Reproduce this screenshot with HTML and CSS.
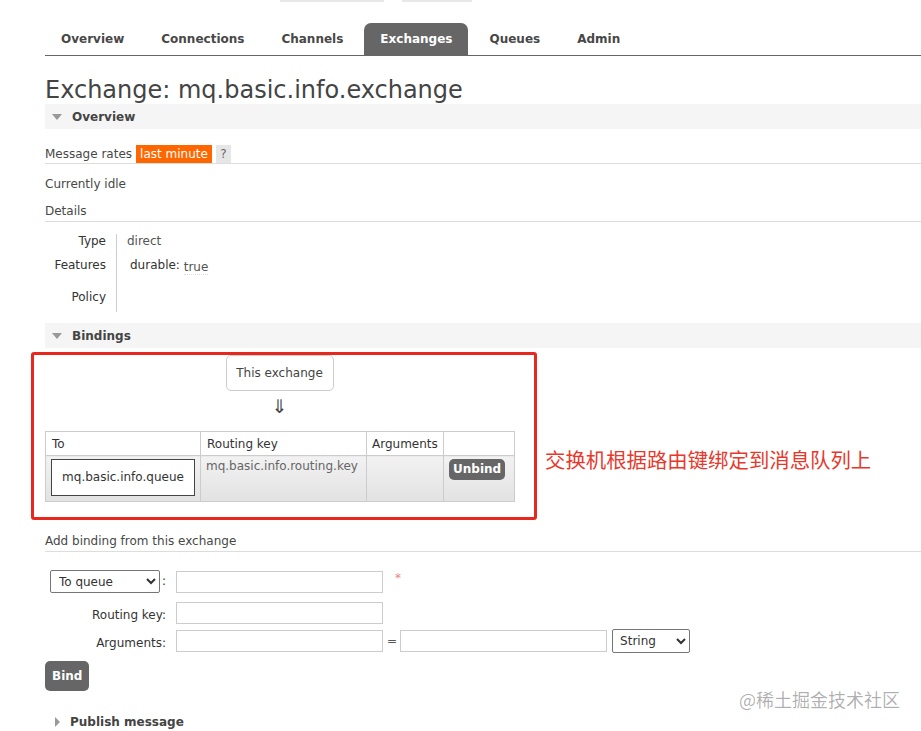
FILE: index.html
```html
<!DOCTYPE html>
<html lang="en">
<head>
<meta charset="utf-8">
<title>Exchange: mq.basic.info.exchange</title>
<link rel="stylesheet" href="styles.css">
</head>
<body>
<div class="topbars"><span class="tb tb1"></span><span class="tb tb2"></span></div>
<div class="page">
  <ul class="tabs">
    <li>Overview</li>
    <li>Connections</li>
    <li>Channels</li>
    <li class="active">Exchanges</li>
    <li>Queues</li>
    <li>Admin</li>
  </ul>
  <h1>Exchange: mq.basic.info.exchange</h1>

  <div class="section-head"><span class="tri-down"></span>Overview</div>
  <div class="rates">Message rates <span class="lm">last minute</span> <span class="help">?</span></div>
  <div class="idle">Currently idle</div>
  <div class="sub">Details</div>
  <div class="details">
    <div class="dl r1">Type</div><div class="dv r1">direct</div>
    <div class="dl r2">Features</div><div class="dv r2"><span class="feat">durable:</span> <span class="true">true</span></div>
    <div class="dl r3">Policy</div><div class="dv r3"></div>
  </div>

  <div class="section-head bind-head"><span class="tri-down"></span>Bindings</div>
  <div class="bind-row">
    <div class="annot">
      <div class="src">This exchange</div>
      <div class="arrow">⇓</div>
      <table class="btable">
        <colgroup><col class="c1"><col class="c2"><col class="c3"><col class="c4"></colgroup>
        <thead>
          <tr><th>To</th><th>Routing key</th><th>Arguments</th><th></th></tr>
        </thead>
        <tbody>
          <tr>
            <td><div class="qbox">mq.basic.info.queue</div></td>
            <td class="rk">mq.basic.info.routing.key</td>
            <td></td>
            <td><span class="btn small">Unbind</span></td>
          </tr>
        </tbody>
      </table>
    </div>
    <div class="annot-text">交换机根据路由键绑定到消息队列上</div>
  </div>

  <div class="sub add">Add binding from this exchange</div>
  <div class="frow row1">
    <div class="flabel"><select class="sel-to"><option>To queue</option></select>:</div>
    <input class="inp" type="text">
    <span class="req">*</span>
  </div>
  <div class="frow row2">
    <div class="flabel">Routing key:</div>
    <input class="inp" type="text">
  </div>
  <div class="frow row3">
    <div class="flabel">Arguments:</div>
    <input class="inp" type="text">
    <span class="eq">=</span>
    <input class="inp" type="text">
    <select class="sel-type"><option>String</option></select>
  </div>
  <div class="btn big">Bind</div>

  <div class="publish"><span class="tri-right"></span>Publish message</div>
</div>
<div class="watermark">@稀土掘金技术社区</div>
</body>
</html>
```
FILE: styles.css
```css
html, body {
  margin: 0;
  padding: 0;
  background: #fff;
}
body {
  position: relative;
  width: 921px;
  height: 731px;
  overflow: hidden;
  font-family: "DejaVu Sans", Verdana, sans-serif;
  font-size: 12px;
  color: #484848;
}
.topbars {
  display: flex;
  height: 2px;
  padding-left: 280px;
  gap: 18px;
}
.tb { background: #e8e8e8; height: 2px; }
.tb1 { width: 104px; }
.tb2 { width: 70px; }

.page {
  padding-left: 45px;
}

.tabs {
  list-style: none;
  margin: 21px 0 0;
  padding: 0;
  display: flex;
  height: 32px;
  border-bottom: 1px solid #666;
}
.tabs li {
  padding: 0 16px;
  margin-right: 5px;
  line-height: 33px;
  font-weight: bold;
  color: #484848;
  border-radius: 7px 7px 0 0;
}
.tabs li.active {
  background: #666;
  color: #fff;
}

h1 {
  margin: 21px 0 0;
  font-size: 24px;
  font-weight: normal;
  line-height: 27px;
  color: #444;
}

.section-head {
  display: flex;
  align-items: center;
  height: 25px;
  background: #f5f5f5;
  font-weight: bold;
  color: #444;
}
.tri-down {
  width: 0;
  height: 0;
  margin: 0 10px 0 7px;
  border-left: 5px solid transparent;
  border-right: 5px solid transparent;
  border-top: 6px solid #999;
}
.tri-right {
  display: inline-block;
  width: 0;
  height: 0;
  margin: 0 10px 0 10px;
  border-top: 5px solid transparent;
  border-bottom: 5px solid transparent;
  border-left: 5px solid #999;
}

.rates {
  margin-top: 16px;
  line-height: 18px;
  border-bottom: 1px solid #ddd;
  display: flex;
  align-items: center;
  gap: 4px;
}
.lm {
  background: #ff6600;
  color: #fff;
  padding: 0 4px;
  line-height: 18px;
}
.help {
  background: #e6e6e6;
  color: #666;
  width: 15px;
  text-align: center;
  line-height: 18px;
}
.idle {
  margin-top: 13px;
  line-height: 15px;
}
.sub {
  margin-top: 12px;
  line-height: 15px;
  padding-bottom: 2px;
  border-bottom: 1px solid #ddd;
}

.details {
  display: grid;
  grid-template-columns: 72px auto;
  margin-top: 12px;
}
.dl {
  text-align: right;
  padding-right: 10px;
  border-right: 1px solid #ccc;
  color: #333;
}
.dv {
  padding-left: 10px;
  color: #555;
}
.r1 { line-height: 14px; }
.r2 { line-height: 34px; }
.r3 { line-height: 30px; }
.feat { color: #333; padding-left: 3px; }
.true {
  vertical-align: -2px;
  line-height: 14px;
  border-bottom: 1px dotted #ddd;
}

.bind-head { margin-top: 11px; }

.bind-row {
  display: flex;
  align-items: flex-start;
  margin: 4px 0 0 -14px;
}
.annot {
  border: 3px solid #e8281e;
  border-radius: 3px;
  padding: 0 20px 15px 11px;
  width: 469px;
}
.src {
  width: 108px;
  height: 36px;
  box-sizing: border-box;
  margin: 0 auto;
  border: 1px solid #ccc;
  border-radius: 5px;
  text-align: center;
  line-height: 34px;
  color: #444;
}
.arrow {
  text-align: center;
  font-size: 19px;
  line-height: 30px;
  color: #444;
}
.btable {
  margin-top: 10px;
  width: 469px;
  table-layout: fixed;
  border-collapse: collapse;
}
.c1 { width: 155px; }
.c2 { width: 166px; }
.c3 { width: 77px; }
.c4 { width: 71px; }
.btable th {
  border: 1px solid #ccc;
  text-align: left;
  font-weight: normal;
  color: #333;
  padding: 2px 6px 0;
  height: 21px;
  line-height: 21px;
}
.btable th:nth-child(3) { padding-left: 5px; }
.btable td {
  border: 1px solid #ccc;
  vertical-align: top;
  padding: 3px 5px 5px;
  background: linear-gradient(#f2f2f2, #e2e2e2);
  height: 37px;
}
.btable td.rk {
  color: #666;
  padding-top: 3px;
  line-height: 15px;
  white-space: nowrap;
}
.qbox {
  width: 144px;
  height: 37px;
  box-sizing: border-box;
  border: 1px solid #444;
  background: #fff;
  text-align: center;
  line-height: 35px;
  color: #333;
}
.btn {
  display: inline-block;
  background: #666;
  color: #fff;
  font-weight: bold;
  border-radius: 5px;
}
.btn.small {
  padding: 0 4px;
  line-height: 21px;
}
.btn.big {
  margin-top: 8px;
  padding: 0 7px;
  line-height: 30px;
}
.annot-text {
  margin: 93px 0 0 8px;
  font-family: "Noto Sans CJK SC", "DejaVu Sans", sans-serif;
  font-size: 20.4px;
  line-height: 28px;
  color: #e8382c;
  white-space: nowrap;
}

.add { margin-top: 14px; }

.frow {
  display: flex;
  align-items: center;
}
.flabel {
  width: 121px;
  margin-right: 10px;
  text-align: right;
  color: #333;
  white-space: nowrap;
}
.row1 { margin-top: 18px; height: 23px; }
.row2 { margin-top: 9px; height: 22px; }
.row3 { margin-top: 5px; height: 24px; }
.row2 .flabel, .row3 .flabel { padding-top: 4px; }
.sel-to {
  width: 110px;
  height: 23px;
  margin-right: 2px;
  padding-left: 4px;
  font-family: "DejaVu Sans", Verdana, sans-serif;
  font-size: 12px;
  color: #333;
  border: 1px solid #767676;
  border-radius: 2px;
  background: #fff;
  vertical-align: middle;
}
.inp {
  width: 207px;
  height: 22px;
  box-sizing: border-box;
  margin: 0;
  border: 1px solid #ccc;
  background: #fff;
}
.req {
  align-self: flex-start;
  margin-left: 12px;
  margin-top: 1px;
  color: #f08080;
  font-size: 12px;
}
.eq {
  margin: 0 3px 0 4px;
  color: #555;
}
.sel-type {
  width: 78px;
  height: 24px;
  margin-left: 5px;
  padding-left: 3px;
  font-family: "DejaVu Sans", Verdana, sans-serif;
  font-size: 12px;
  color: #333;
  border: 1px solid #767676;
  border-radius: 2px;
  background: #fff;
}

.publish {
  margin-top: 22px;
  line-height: 18px;
  font-weight: bold;
  color: #444;
  display: flex;
  align-items: center;
}
.publish .tri-right { margin: 0 10px 0 10px; }

.watermark {
  position: absolute;
  left: 739px;
  top: 687px;
  font-family: "Noto Sans CJK SC", "DejaVu Sans", sans-serif;
  font-size: 18px;
  line-height: 24px;
  color: rgba(0, 0, 0, 0.33);
  white-space: nowrap;
}
```
